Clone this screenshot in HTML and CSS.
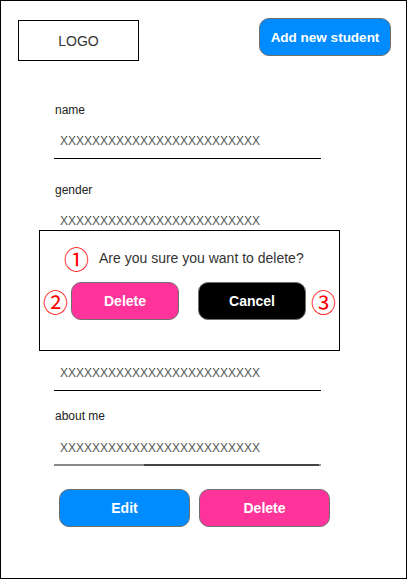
FILE: index.html
```html
<!DOCTYPE html>
<html lang="en">
<head>
<meta charset="utf-8">
<title>Student</title>
<link rel="stylesheet" href="styles.css">
</head>
<body>
<div class="frame">
  <header class="header">
    <div class="logo">LOGO</div>
    <button class="btn btn-blue btn-add">Add new student</button>
  </header>
  <main class="form">
    <div class="field">
      <div class="label">name</div>
      <div class="value">XXXXXXXXXXXXXXXXXXXXXXXXX</div>
    </div>
    <div class="field">
      <div class="label">gender</div>
      <div class="value">XXXXXXXXXXXXXXXXXXXXXXXXX</div>
    </div>
    <div class="field field-hidden">
      <div class="label">birthday</div>
      <div class="value">XXXXXXXXXXXXXXXXXXXXXXXXX</div>
    </div>
    <div class="field field-about">
      <div class="label">about me</div>
      <div class="value value-area">XXXXXXXXXXXXXXXXXXXXXXXXX</div>
      <div class="area-bar"></div>
    </div>
    <div class="actions">
      <button class="btn btn-blue btn-wide">Edit</button>
      <button class="btn btn-pink btn-wide">Delete</button>
    </div>
  </main>
  <div class="dialog">
    <div class="dialog-msg">
      <span class="mark">①</span>
      <span class="msg-text">Are you sure you want to delete?</span>
    </div>
    <div class="dialog-actions">
      <span class="mark">②</span>
      <button class="btn btn-pink btn-dlg">Delete</button>
      <button class="btn btn-black btn-dlg btn-cancel">Cancel</button>
      <span class="mark mark-3">③</span>
    </div>
  </div>
</div>
</body>
</html>
```
FILE: styles.css
```css
* { box-sizing: border-box; }
html, body { margin: 0; padding: 0; background: #fff; }
body { font-family: "Liberation Sans", Arial, sans-serif; color: #333; }

.frame {
  position: relative;
  width: 407px;
  height: 579px;
  border: 1px solid #000;
  background: #fff;
}

.header {
  display: flex;
  justify-content: space-between;
  align-items: flex-start;
  padding: 17px 15px 0 17px;
}

.logo {
  margin-top: 2px;
  width: 121px;
  height: 41px;
  border: 1px solid #000;
  display: flex;
  align-items: center;
  justify-content: center;
  font-size: 14px;
  color: #333;
}

.btn {
  font-family: "Liberation Sans", Arial, sans-serif;
  font-weight: bold;
  font-size: 14px;
  color: #fff;
  border: 1px solid #6f6f6f;
  border-radius: 10px;
  height: 38px;
  padding: 0;
  display: flex;
  flex-shrink: 0;
  align-items: center;
  justify-content: center;
}
.btn-blue { background: #008cff; }
.btn-pink { background: #ff3399; }
.btn-black { background: #000; }

.btn-add {
  width: 132px;
  font-size: 13.5px;
}

.form {
  margin-left: 53px;
  width: 267px;
  padding-top: 42px;
}

.label {
  font-size: 12px;
  line-height: 14px;
  margin-left: 1px;
  color: #222;
}

.value {
  font-size: 12px;
  line-height: 16px;
  color: #555;
  margin-top: 16px;
  padding: 0 0 9px 6px;
  border-bottom: 1px solid #000;
}

.field + .field { margin-top: 24px; }
.field.field-hidden { margin-top: 96px; }
.field.field-about { margin-top: 18px; }

.value-area {
  margin-top: 17px;
  padding-bottom: 8px;
  border-bottom: none;
}
.area-bar {
  height: 2px;
  background: linear-gradient(to right, #8a8a8a 0, #8a8a8a 90px, #444 90px, #444 265px, #999 265px);
}

.actions {
  display: flex;
  gap: 9px;
  padding-left: 5px;
  margin-top: 23px;
}
.btn-wide { width: 131px; }

.dialog {
  position: absolute;
  left: 38px;
  top: 229px;
  width: 301px;
  height: 121px;
  border: 1px solid #000;
  background: #fff;
}

.dialog-msg {
  display: flex;
  align-items: center;
  height: 22px;
  margin-top: 16px;
  padding-left: 26px;
}

.mark {
  font-family: "Noto Sans CJK JP", "DejaVu Sans", sans-serif;
  color: #ff0000;
  font-size: 25px;
  line-height: 22px;
  width: 21px;
  text-align: center;
  display: inline-flex;
  justify-content: center;
  flex-shrink: 0;
}

.msg-text {
  margin-left: 12px;
  font-size: 14px;
  color: #333;
}

.dialog-actions {
  display: flex;
  align-items: center;
  margin-top: 13px;
  padding-left: 5px;
}
.btn-dlg { width: 108px; margin-left: 5px; }
.btn-cancel { margin-left: 19px; }
.mark-3 { margin-left: 7px; }
```
